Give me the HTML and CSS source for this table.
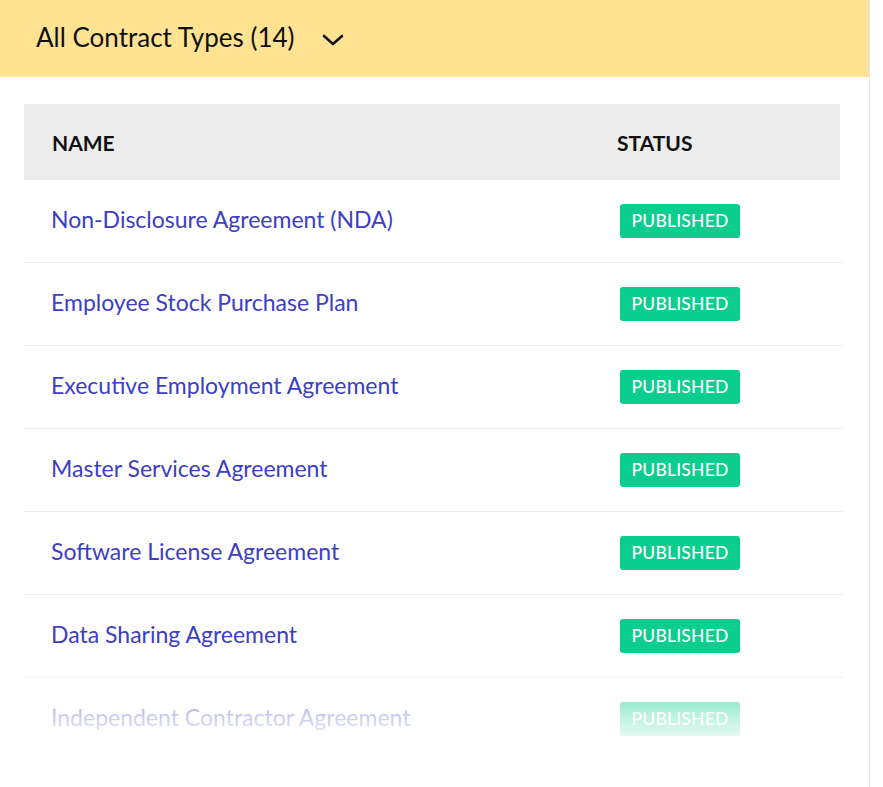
FILE: index.html
```html
<!DOCTYPE html>
<html>
<head>
<meta charset="utf-8">
<link rel="stylesheet" href="styles.css">
</head>
<body>
<div class="card">
  <div class="topbar">
    <span class="title">All Contract Types (14)</span>
    <svg class="chev" width="22" height="12" viewBox="0 0 22 12"><path d="M2 2 L11 10 L20 2" fill="none" stroke="#111" stroke-width="2.6" stroke-linecap="round" stroke-linejoin="round"/></svg>
  </div>
  <div class="table">
    <div class="thead">
      <div class="th name">NAME</div>
      <div class="th status">STATUS</div>
    </div>
    <div class="row"><a class="link">Non-Disclosure Agreement (NDA)</a><span class="badge">PUBLISHED</span></div>
    <div class="row"><a class="link">Employee Stock Purchase Plan</a><span class="badge">PUBLISHED</span></div>
    <div class="row"><a class="link">Executive Employment Agreement</a><span class="badge">PUBLISHED</span></div>
    <div class="row"><a class="link">Master Services Agreement</a><span class="badge">PUBLISHED</span></div>
    <div class="row"><a class="link">Software License Agreement</a><span class="badge">PUBLISHED</span></div>
    <div class="row"><a class="link">Data Sharing Agreement</a><span class="badge">PUBLISHED</span></div>
    <div class="row"><a class="link">Independent Contractor Agreement</a><span class="badge">PUBLISHED</span></div>
  </div>
  <div class="fade"></div>
</div>
</body>
</html>
```
FILE: styles.css
```css
html, body {
  margin: 0;
  padding: 0;
  background: #fff;
  font-family: Lato, "Noto Sans", sans-serif;
  overflow: hidden;
}
.card {
  position: relative;
  width: 869px;
  height: 787px;
  border-right: 1px solid #e4e4f4;
  overflow: hidden;
  background: #fff;
}
.topbar {
  height: 77px;
  background: #ffe393;
  display: flex;
  align-items: center;
  padding-left: 36px;
}
.title {
  font-size: 26px;
  color: #111;
  margin-top: -4px;
}
.chev {
  margin-left: 27px;
  margin-top: 2px;
}
.table {
  margin: 27px 0 0 24px;
  width: 819px;
}
.thead {
  display: grid;
  grid-template-columns: 593px 1fr;
  align-items: center;
  height: 76px;
  background: #ececec;
  margin-right: 3px;
}
.th {
  font-size: 21px;
  font-weight: bold;
  color: #111;
  margin-top: 1px;
}
.th.name {
  padding-left: 28px;
}
.row {
  display: grid;
  grid-template-columns: 596px 1fr;
  align-items: center;
  height: 82px;
  border-bottom: 1px solid #ededed;
}
.row:first-of-type { height: 80px; }
.link {
  padding-left: 27px;
  font-size: 23px;
  color: #3c3ec6;
  text-decoration: none;
  margin-top: -5px;
}
.badge {
  justify-self: start;
  width: 120px;
  height: 34px;
  line-height: 34px;
  box-sizing: border-box;
  text-align: center;
  background: #0bce8e;
  color: #fff;
  border-radius: 3px;
  font-size: 17.5px;
  font-weight: 500;
  letter-spacing: 0.2px;
}
.fade {
  position: absolute;
  left: 0;
  right: 0;
  top: 0;
  bottom: 0;
  pointer-events: none;
  background: linear-gradient(to bottom, rgba(255,255,255,0) 0, rgba(255,255,255,0) 655px, rgba(255,255,255,0.72) 715px, rgba(255,255,255,1) 752px);
}
```
